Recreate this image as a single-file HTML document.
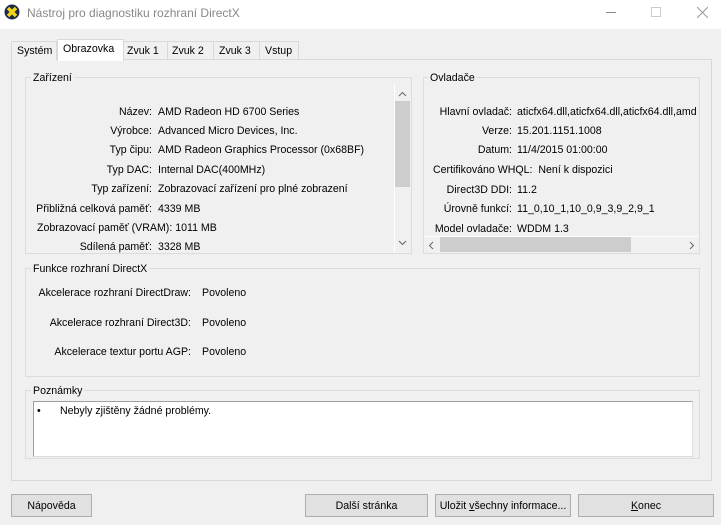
<!DOCTYPE html><html><head><meta charset="utf-8"><style>
*{margin:0;padding:0;box-sizing:border-box}
body{width:721px;height:525px;background:#f0f0f0;font-family:"Liberation Sans",sans-serif;font-size:11px;color:#000;position:relative;overflow:hidden}
.a{position:absolute;white-space:nowrap;line-height:13px;margin-top:1px;font-size:10.6px}
.r{text-align:right}
.box{position:absolute;border:1px solid #dcdcdc}
.lg{position:absolute;background:#f0f0f0;padding:0 2px;line-height:13px;margin-top:1px;font-size:10.6px}
.btn{position:absolute;border:1px solid #adadad;background:#e1e1e1;text-align:center;line-height:22px;height:23px;font-size:10.6px}
</style></head><body>
<div style="position:absolute;left:0;top:0;width:721px;height:29px;background:#fff"></div>
<svg style="position:absolute;left:4px;top:4px" width="16" height="16"><circle cx="8" cy="8" r="7.5" fill="#1a2a4a"/><path d="M4 4 L12 12 M12 4 L4 12" stroke="#f3d21a" stroke-width="3.5"/></svg>
<div class="a" style="left:27px;top:6px;font-size:12px;color:#888">Nástroj pro diagnostiku rozhraní DirectX</div>
<div style="position:absolute;left:606px;top:12px;width:10px;height:1px;background:#888"></div>
<div style="position:absolute;left:651px;top:7px;width:10px;height:10px;border:1px solid #ccc"></div>
<svg style="position:absolute;left:697px;top:7px" width="11" height="11"><path d="M0 0L11 11M11 0L0 11" stroke="#999" stroke-width="1"/></svg>

<div style="position:absolute;left:11px;top:59px;width:701px;height:422px;border:1px solid #d9d9d9;background:#f0f0f0"></div>
<div style="position:absolute;left:11px;top:41px;width:46px;height:19px;border:1px solid #d9d9d9;border-bottom:none;background:#f0f0f0"></div>
<div class="a" style="left:17px;top:44px">Systém</div>
<div style="position:absolute;left:57px;top:39px;width:67px;height:22px;border:1px solid #d9d9d9;border-bottom:none;background:#fff"></div>
<div class="a" style="left:63px;top:42px">Obrazovka</div>
<div style="position:absolute;left:123px;top:41px;width:45px;height:19px;border:1px solid #d9d9d9;border-bottom:none"></div>
<div class="a" style="left:127px;top:44px">Zvuk 1</div>
<div style="position:absolute;left:167px;top:41px;width:47px;height:19px;border:1px solid #d9d9d9;border-bottom:none"></div>
<div class="a" style="left:172px;top:44px">Zvuk 2</div>
<div style="position:absolute;left:213px;top:41px;width:47px;height:19px;border:1px solid #d9d9d9;border-bottom:none"></div>
<div class="a" style="left:219px;top:44px">Zvuk 3</div>
<div style="position:absolute;left:259px;top:41px;width:40px;height:19px;border:1px solid #d9d9d9;border-bottom:none"></div>
<div class="a" style="left:265px;top:44px">Vstup</div>

<div class="box" style="left:25px;top:77px;width:387px;height:177px"></div>
<div class="lg" style="left:31px;top:71px">Zařízení</div>
<div style="position:absolute;left:394px;top:84px;width:17px;height:169px;background:#f0f0f0;border-left:1px solid #fff"></div>
<div style="position:absolute;left:395px;top:101px;width:15px;height:86px;background:#cdcdcd"></div>
<svg style="position:absolute;left:398px;top:240px" width="9" height="6"><path d="M1 1L4.5 4.5L8 1" stroke="#666" fill="none"/></svg>
<svg style="position:absolute;left:398px;top:91px" width="9" height="6"><path d="M1 5L4.5 1.5L8 5" stroke="#666" fill="none"/></svg>

<div class="a r" style="left:20px;width:132px;top:105px">Název:</div><div class="a" style="left:158px;top:105px">AMD Radeon HD 6700 Series</div>
<div class="a r" style="left:20px;width:132px;top:124px">Výrobce:</div><div class="a" style="left:158px;top:124px">Advanced Micro Devices, Inc.</div>
<div class="a r" style="left:20px;width:132px;top:143px">Typ čipu:</div><div class="a" style="left:158px;top:143px">AMD Radeon Graphics Processor (0x68BF)</div>
<div class="a r" style="left:20px;width:132px;top:163px">Typ DAC:</div><div class="a" style="left:158px;top:163px">Internal DAC(400MHz)</div>
<div class="a r" style="left:20px;width:132px;top:182px">Typ zařízení:</div><div class="a" style="left:158px;top:182px">Zobrazovací zařízení pro plné zobrazení</div>
<div class="a r" style="left:20px;width:132px;top:202px">Přibližná celková paměť:</div><div class="a" style="left:158px;top:202px">4339 MB</div>
<div class="a" style="left:37px;top:221px">Zobrazovací paměť (VRAM): 1011 MB</div>
<div class="a r" style="left:20px;width:132px;top:240px">Sdílená paměť:</div><div class="a" style="left:158px;top:240px">3328 MB</div>

<div class="box" style="left:423px;top:77px;width:277px;height:177px"></div>
<div class="lg" style="left:428px;top:71px">Ovladače</div>
<div class="a r" style="left:420px;width:92px;top:105px">Hlavní ovladač:</div><div class="a" style="left:517px;top:105px;width:182px;overflow:hidden">aticfx64.dll,aticfx64.dll,aticfx64.dll,amd</div>
<div class="a r" style="left:420px;width:92px;top:124px">Verze:</div><div class="a" style="left:517px;top:124px">15.201.1151.1008</div>
<div class="a r" style="left:420px;width:92px;top:143px">Datum:</div><div class="a" style="left:517px;top:143px">11/4/2015 01:00:00</div>
<div class="a" style="left:433px;top:163px">Certifikováno WHQL:&nbsp; Není k dispozici</div>
<div class="a r" style="left:420px;width:92px;top:183px">Direct3D DDI:</div><div class="a" style="left:517px;top:183px">11.2</div>
<div class="a r" style="left:420px;width:92px;top:202px">Úrovně funkcí:</div><div class="a" style="left:517px;top:202px">11_0,10_1,10_0,9_3,9_2,9_1</div>
<div class="a r" style="left:420px;width:92px;top:222px">Model ovladače:</div><div class="a" style="left:517px;top:222px">WDDM 1.3</div>
<div style="position:absolute;left:424px;top:236px;width:275px;height:17px;border-top:1px solid #fff;background:#f0f0f0"></div>
<div style="position:absolute;left:440px;top:237px;width:191px;height:15px;background:#cdcdcd"></div>
<svg style="position:absolute;left:428px;top:241px" width="6" height="9"><path d="M5 1L1.5 4.5L5 8" stroke="#666" fill="none"/></svg>
<svg style="position:absolute;left:689px;top:241px" width="6" height="9"><path d="M1 1L4.5 4.5L1 8" stroke="#666" fill="none"/></svg>

<div class="box" style="left:25px;top:268px;width:675px;height:109px"></div>
<div class="lg" style="left:31px;top:262px">Funkce rozhraní DirectX</div>
<div class="a r" style="left:20px;width:171px;top:286px">Akcelerace rozhraní DirectDraw:</div><div class="a" style="left:202px;top:286px">Povoleno</div>
<div class="a r" style="left:20px;width:171px;top:316px">Akcelerace rozhraní Direct3D:</div><div class="a" style="left:202px;top:316px">Povoleno</div>
<div class="a r" style="left:20px;width:171px;top:345px">Akcelerace textur portu AGP:</div><div class="a" style="left:202px;top:345px">Povoleno</div>

<div class="box" style="left:25px;top:390px;width:675px;height:69px"></div>
<div class="lg" style="left:31px;top:384px">Poznámky</div>
<div style="position:absolute;left:33px;top:401px;width:660px;height:56px;background:#fff;border:1px solid #dcdcdc;border-top-color:#a0a0a0;border-left-color:#a0a0a0"></div>
<div class="a" style="left:37px;top:404px">•</div>
<div class="a" style="left:60px;top:404px">Nebyly zjištěny žádné problémy.</div>

<div class="btn" style="left:11px;top:494px;width:81px">Nápověda</div>
<div class="btn" style="left:305px;top:494px;width:123px">Další stránka</div>
<div class="btn" style="left:435px;top:494px;width:136px">Uložit <u>v</u>šechny informace...</div>
<div class="btn" style="left:578px;top:494px;width:136px"><u>K</u>onec</div>
</body></html>
